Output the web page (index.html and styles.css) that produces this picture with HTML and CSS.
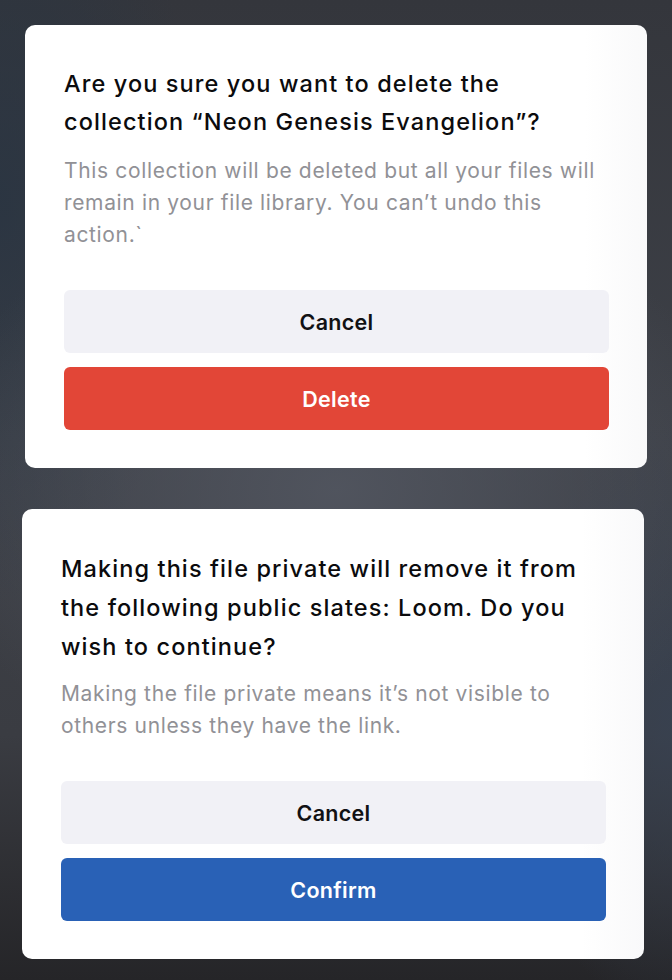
FILE: index.html
```html
<!DOCTYPE html>
<html lang="en">
<head>
  <meta charset="UTF-8" />
  <meta name="viewport" content="width=device-width, initial-scale=1.0" />
  <title>Confirm dialogs</title>
  <link rel="stylesheet" href="styles.css">
</head>
<body>
  <div class="backdrop">
    <div class="modal modal-delete">
      <h2 class="modal-title">Are you sure you want to delete the collection “Neon Genesis Evangelion”?</h2>
      <p class="modal-text">This collection will be deleted but all your files will remain in your file library. You can’t undo this action.`</p>
      <div class="modal-actions">
        <button class="btn btn-cancel">Cancel</button>
        <button class="btn btn-danger">Delete</button>
      </div>
    </div>

    <div class="modal modal-private">
      <h2 class="modal-title">Making this file private will remove it from the following public slates: Loom. Do you wish to continue?</h2>
      <p class="modal-text">Making the file private means it’s not visible to others unless they have the link.</p>
      <div class="modal-actions">
        <button class="btn btn-cancel">Cancel</button>
        <button class="btn btn-primary">Confirm</button>
      </div>
    </div>
  </div>
</body>
</html>
```

FILE: styles.css
```css
html, body {
  margin: 0;
  height: 100%;
}
body {
  font-family: Inter, "Noto Sans", sans-serif;
  background: #2b2c31;
}
.backdrop {
  min-height: 980px;
  box-sizing: border-box;
  padding-top: 25px;
  background:
    radial-gradient(ellipse 420px 300px at 50% 490px, rgba(82, 86, 96, 0.9), rgba(82, 86, 96, 0) 100%),
    radial-gradient(ellipse 200px 400px at 0 200px, rgba(40, 52, 66, 0.8), rgba(40, 52, 66, 0) 100%),
    radial-gradient(ellipse 160px 300px at 672px 720px, rgba(56, 66, 82, 0.8), rgba(56, 66, 82, 0) 100%),
    linear-gradient(180deg, #34363c 0%, #3e4148 45%, #3a3c42 75%, #252528 100%);
}
.modal {
  width: 622px;
  box-sizing: border-box;
  padding: 40px 36px 38px 39px;
  background: linear-gradient(90deg, #ffffff 0%, #ffffff 90%, #f9f9fa 100%);
  border-radius: 10px;
}
.modal-delete {
  margin-left: 25px;
}
.modal-private {
  margin-left: 22px;
  margin-top: 41px;
}
.modal-title {
  margin: 0;
  font-size: 23.5px;
  font-weight: 500;
  letter-spacing: 1.1px;
  line-height: 38px;
  color: #0b0b0d;
}
.modal-private .modal-title {
  line-height: 39px;
}
.modal-text {
  margin: 14px 0 0;
  font-size: 21px;
  letter-spacing: 0.65px;
  line-height: 32px;
  color: #919196;
}
.modal-private .modal-text {
  margin-top: 12px;
}
.modal-actions {
  display: flex;
  flex-direction: column;
  gap: 14px;
  margin-top: 39px;
  margin-right: 2px;
}
.btn {
  height: 63px;
  border: none;
  border-radius: 6px;
  font-family: inherit;
  font-size: 21.5px;
  font-weight: 600;
  letter-spacing: 0.3px;
}
.btn-cancel {
  background: #f1f1f6;
  color: #111114;
}
.btn-danger {
  background: #e24637;
  color: #ffffff;
}
.btn-primary {
  background: #2961b6;
  color: #ffffff;
}
```
